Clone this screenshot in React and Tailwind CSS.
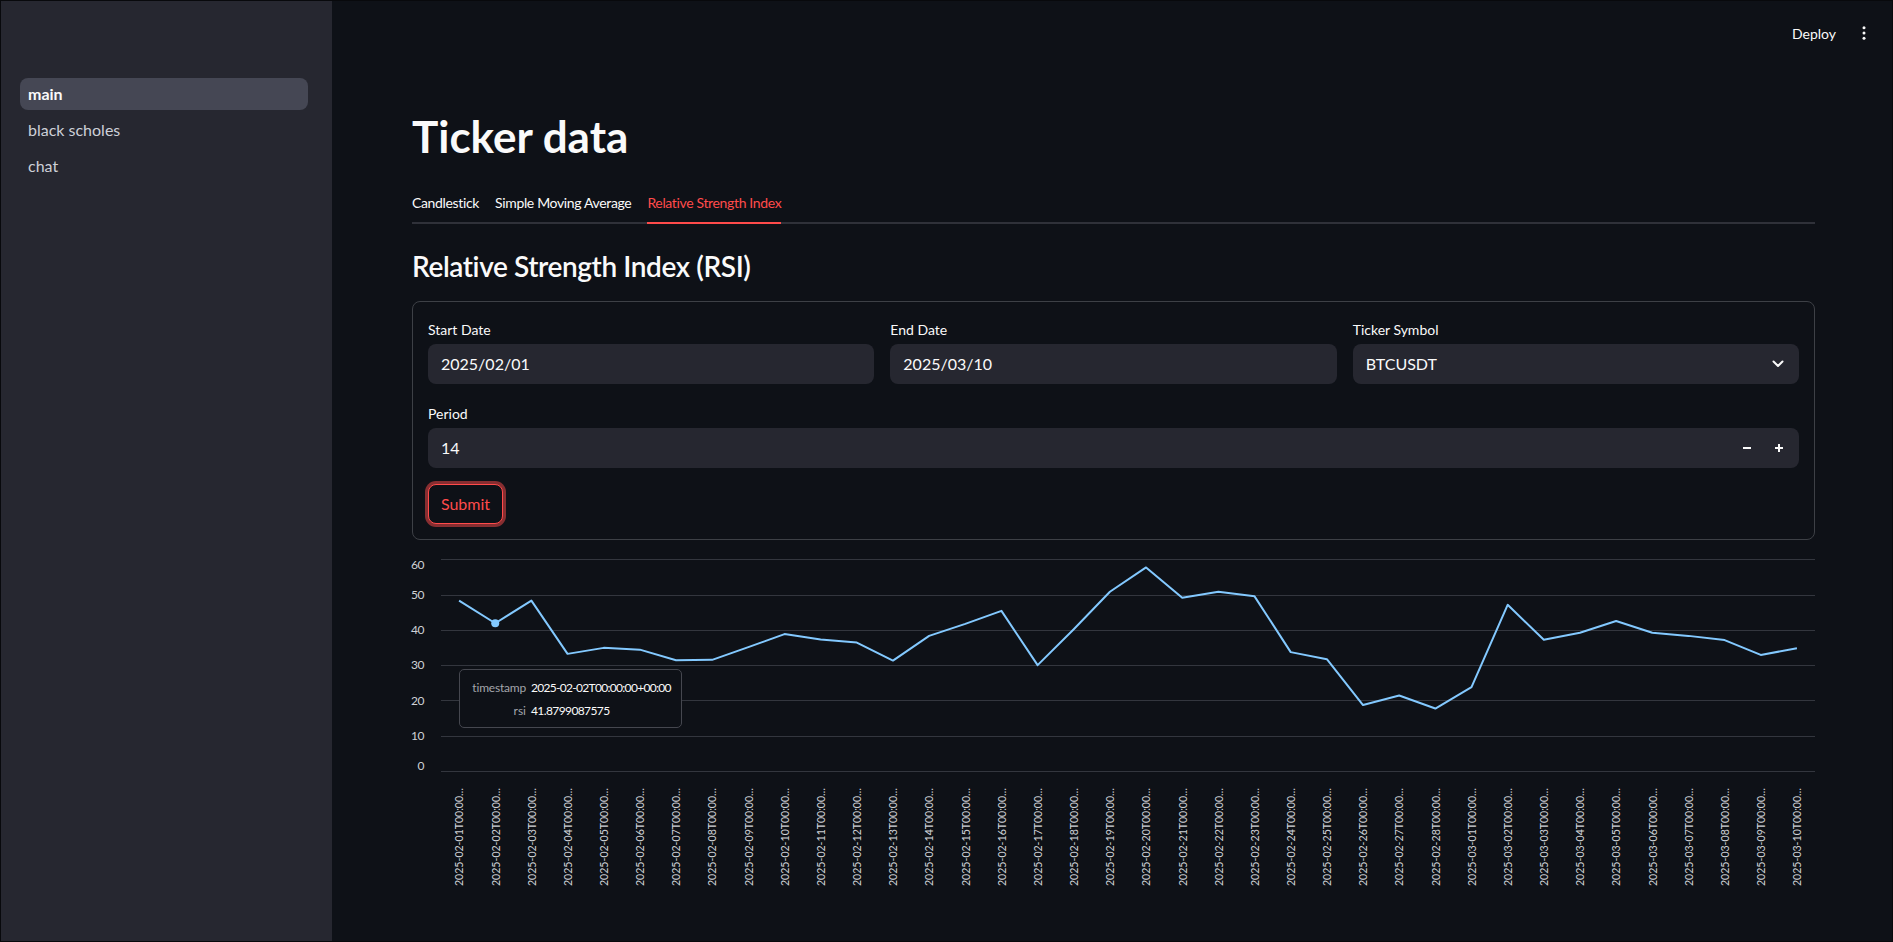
import React from "react";

const values = [
  48.3, 41.8799087575, 48.3, 33.2, 34.9, 34.4, 31.4, 31.5, 35.1, 38.8, 37.3,
  36.4, 31.3, 38.3, 41.7, 45.4, 30.0, 40.2, 50.8, 57.7, 49.1, 50.8, 49.5, 33.7,
  31.7, 18.7, 21.4, 17.7, 23.8, 47.1, 37.2, 39.2, 42.5, 39.2, 38.3, 37.1, 32.9,
  34.8,
];

const dates = values.map((_, i) => {
  if (i < 28) return `2025-02-${String(i + 1).padStart(2, "0")}`;
  return `2025-03-${String(i - 27).padStart(2, "0")}`;
});

const FONT = "Lato, sans-serif";

function Chart() {
  const X0 = 29;
  const W = 1374;
  const n = values.length;
  const band = W / n;
  const xs = (i) => X0 + band / 2 + i * band;
  const y = (v) => 223 - v * 3.528;
  const pts = values
    .map((v, i) => `${xs(i).toFixed(2)},${y(v).toFixed(2)}`)
    .join(" ");
  const ticks = [0, 10, 20, 30, 40, 50, 60];
  return (
    <div className="relative mt-[8px] h-[393px]">
      <svg width="1403" height="393" className="block overflow-visible">
        {ticks.map((t) => (
          <line
            key={t}
            x1={X0}
            x2={1403}
            y1={Math.round(y(t)) + 0.5}
            y2={Math.round(y(t)) + 0.5}
            stroke="#33363e"
            strokeWidth="1"
          />
        ))}
        {ticks.map((t) => {
          let by = y(t) + 4.3;
          if (t === 60) by = 20.5;
          if (t === 0) by = 222;
          return (
            <text
              key={t}
              x={12}
              y={by}
              textAnchor="end"
              fontSize="12"
              fill="#cfd1d6"
              fontFamily={FONT}
              letterSpacing="-0.5"
            >
              {t}
            </text>
          );
        })}
        <polyline
          points={pts}
          fill="none"
          stroke="#83c9ff"
          strokeWidth="2"
          strokeLinejoin="round"
        />
        <circle cx={xs(1)} cy={y(values[1])} r="4" fill="#83c9ff" />
        {dates.map((d, i) => (
          <text
            key={d}
            transform={`translate(${(xs(i) + 4.3).toFixed(2)},240) rotate(-90)`}
            textAnchor="end"
            fontSize="12"
            fill="#cfd1d6"
            fontFamily={FONT}
            textLength="98"
            lengthAdjust="spacingAndGlyphs"
          >
            {`${d}T00:00…`}
          </text>
        ))}
      </svg>
      <div className="absolute left-[47px] top-[121px] w-[223px] h-[59px] rounded-[5px] border border-[#45474f] bg-[#0e1117] pt-[6px] text-[12px] whitespace-nowrap">
        <div className="flex leading-[23px]">
          <span className="w-[66px] text-right text-[#a3a5ab] tracking-[-0.2px]">timestamp</span>
          <span className="ml-[5px] text-[#fafafa] tracking-[-0.7px]">2025-02-02T00:00:00+00:00</span>
        </div>
        <div className="flex leading-[23px]">
          <span className="w-[66px] text-right text-[#a3a5ab]">rsi</span>
          <span className="ml-[5px] text-[#fafafa] tracking-[-0.6px]">41.8799087575</span>
        </div>
      </div>
    </div>
  );
}

function Field({ label, children, className = "" }) {
  return (
    <div className={`flex flex-col ${className}`}>
      <div className="h-[24px] mb-[3px] flex items-center text-[14px] text-[#fafafa]">
        {label}
      </div>
      {children}
    </div>
  );
}

function InputBox({ children }) {
  return (
    <div className="h-[40px] rounded-lg bg-[#262730] pl-[13px] pr-[12px] flex items-center text-[16px] text-[#fafafa]">
      {children}
    </div>
  );
}

export default function App() {
  return (
    <div className="w-[1893px] h-[942px] border border-[#08090c] flex bg-[#0e1117] overflow-hidden font-[family-name:Lato,sans-serif] text-[#fafafa]">
      <aside className="w-[331px] shrink-0 bg-[#262730] pt-[77px] pl-[19px] pr-[24px]">
        <nav className="flex flex-col gap-[4px]">
          <div className="h-[32px] rounded-lg bg-[#454754] pl-[8px] flex items-center text-[16px] font-bold text-[#fafafa]">
            main
          </div>
          <div className="h-[32px] pl-[8px] flex items-center text-[16px] text-[#cdd0d8]">
            black scholes
          </div>
          <div className="h-[32px] pl-[8px] flex items-center text-[16px] text-[#cdd0d8]">
            chat
          </div>
        </nav>
      </aside>
      <main className="flex-1 flex flex-col min-w-0">
        <header className="h-[64px] flex items-center justify-end pr-[20px]">
          <span className="text-[14px] text-[#fafafa]">Deploy</span>
          <svg width="16" height="16" viewBox="0 0 16 16" className="ml-[20px]">
            <circle cx="8" cy="2.7" r="1.5" fill="#fafafa" />
            <circle cx="8" cy="8" r="1.5" fill="#fafafa" />
            <circle cx="8" cy="13.3" r="1.5" fill="#fafafa" />
          </svg>
        </header>
        <div className="pl-[80px] pr-[77px] flex flex-col">
          <h1 className="mt-[45px] text-[44px] font-bold leading-[53px] text-[#fafafa]">
            Ticker data
          </h1>
          <div className="mt-[19px] flex gap-[16px] border-b-2 border-[#2f3139] text-[14px] tracking-[-0.35px]">
            <div className="h-[40px] flex items-center text-[#fafafa]">
              Candlestick
            </div>
            <div className="h-[40px] flex items-center text-[#fafafa]">
              Simple Moving Average
            </div>
            <div className="relative h-[40px] flex items-center text-[#ff4b4b]">
              Relative Strength Index
              <span className="absolute left-0 right-0 -bottom-[2px] h-[2px] bg-[#ff4b4b]" />
            </div>
          </div>
          <h3 className="mt-[25px] text-[28px] font-semibold leading-[34px] tracking-[-0.4px] text-[#fafafa]">
            Relative Strength Index (RSI)
          </h3>
          <form className="mt-[18px] rounded-lg border border-[#3d4046] p-[15px] flex flex-col">
            <div className="grid grid-cols-3 gap-[16px]">
              <Field label="Start Date">
                <InputBox>2025/02/01</InputBox>
              </Field>
              <Field label="End Date">
                <InputBox>2025/03/10</InputBox>
              </Field>
              <Field label="Ticker Symbol">
                <InputBox>
                  <span className="flex-1">BTCUSDT</span>
                  <svg width="12" height="8" viewBox="0 0 12 8" className="mr-[3px]">
                    <path
                      d="M1.5 1.5 L6 6 L10.5 1.5"
                      fill="none"
                      stroke="#fafafa"
                      strokeWidth="2"
                      strokeLinecap="round"
                      strokeLinejoin="round"
                    />
                  </svg>
                </InputBox>
              </Field>
            </div>
            <Field label="Period" className="mt-[17px]">
              <InputBox>
                <span className="flex-1">14</span>
                <svg width="10" height="10" viewBox="0 0 10 10" className="mr-[22px]">
                  <path d="M1 5 H9" stroke="#fafafa" strokeWidth="2" />
                </svg>
                <svg width="10" height="10" viewBox="0 0 10 10" className="mr-[3px]">
                  <path d="M1 5 H9 M5 1 V9" stroke="#fafafa" strokeWidth="2" />
                </svg>
              </InputBox>
            </Field>
            <div className="mt-[16px]">
              <button
                type="button"
                className="h-[40px] w-[75px] rounded-lg border border-[#ff4b4b] bg-[#0e1117] text-[16px] text-[#ff4b4b] shadow-[0_0_0_3px_rgba(255,75,75,0.5)] flex items-center justify-center"
              >
                Submit
              </button>
            </div>
          </form>
          <Chart />
        </div>
      </main>
    </div>
  );
}
